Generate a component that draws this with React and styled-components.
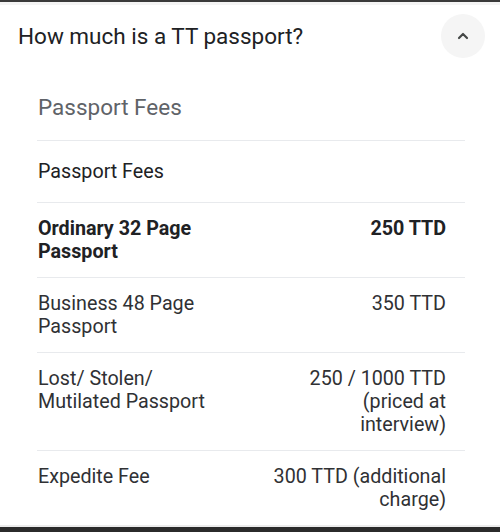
import React from 'react';
import styled, { createGlobalStyle } from 'styled-components';

const GlobalStyle = createGlobalStyle`
  html, body {
    margin: 0;
    padding: 0;
    background: #fff;
  }
  body {
    font-family: Roboto, "Noto Sans", "Liberation Sans", sans-serif;
    color: #202124;
  }
`;

const fees = [
  { name: 'Ordinary 32 Page Passport', price: '250 TTD', bold: true },
  { name: 'Business 48 Page Passport', price: '350 TTD' },
  { name: 'Lost/ Stolen/ Mutilated Passport', price: '250 / 1000 TTD (priced at interview)' },
  { name: 'Expedite Fee', price: '300 TTD (additional charge)' },
];

function ChevronUp() {
  return (
    <svg width='16' height='16' viewBox='0 0 24 24' fill='none'>
      <path d='M6 15l6-6 6 6' stroke='#444746' strokeWidth='3.2' strokeLinecap='round' strokeLinejoin='round' />
    </svg>
  );
}

export default function App() {
  return (
    <Page>
      <GlobalStyle />
      <TopEdge />
      <Header>
        <Question>How much is a TT passport?</Question>
        <ToggleButton aria-label='Collapse'>
          <ChevronUp />
        </ToggleButton>
      </Header>
      <Answer>
        <Caption>Passport Fees</Caption>
        <Table>
          <HeadRow>
            <Cell>Passport Fees</Cell>
          </HeadRow>
          {fees.map((fee) => (
            <Row key={fee.name} $bold={fee.bold}>
              <Cell>{fee.name}</Cell>
              <PriceCell>{fee.price}</PriceCell>
            </Row>
          ))}
        </Table>
      </Answer>
      <BottomBar />
    </Page>
  );
}

const Page = styled.div`
  width: 500px;
  height: 532px;
  display: flex;
  flex-direction: column;
  overflow: hidden;
  background: #fff;
`;

const TopEdge = styled.div`
  height: 2px;
  background: #3a3a3a;
  border-bottom: 3px solid #f4f4f4;
  flex-shrink: 0;
`;

const Header = styled.div`
  display: flex;
  align-items: center;
  justify-content: space-between;
  height: 62px;
  padding: 0 15px 0 18px;
  flex-shrink: 0;
`;

const Question = styled.h2`
  margin: 0;
  font-size: 22.5px;
  line-height: 28px;
  font-weight: 400;
  color: #202124;
`;

const ToggleButton = styled.button`
  width: 44px;
  height: 44px;
  border: none;
  border-radius: 50%;
  background: #f5f5f5;
  display: flex;
  align-items: center;
  justify-content: center;
  padding: 0;
`;

const Answer = styled.div`
  flex: 1;
  padding: 28px 35px 0 37px;
`;

const Caption = styled.div`
  font-size: 22.5px;
  line-height: 24px;
  color: #5f6368;
  padding: 0 1px 21px;
`;

const Table = styled.div`
  display: flex;
  flex-direction: column;
`;

const Row = styled.div`
  display: grid;
  grid-template-columns: 1fr 173.5px;
  column-gap: 40px;
  border-top: 1px solid #e8eaed;
  padding: 14px 19px 14px 1px;
  font-size: 19.7px;
  line-height: 23px;
  font-weight: ${(p) => (p.$bold ? 700 : 400)};
  color: ${(p) => (p.$bold ? '#202124' : '#303134')};
`;

const HeadRow = styled(Row)`
  padding: 19px 0 19px 1px;
  grid-template-columns: 1fr;
  color: #202124;
`;

const Cell = styled.div``;

const PriceCell = styled.div`
  text-align: right;
`;

const BottomBar = styled.div`
  height: 5px;
  background: #2b2b2b;
  border-top: 2px solid #ececec;
  flex-shrink: 0;
`;
